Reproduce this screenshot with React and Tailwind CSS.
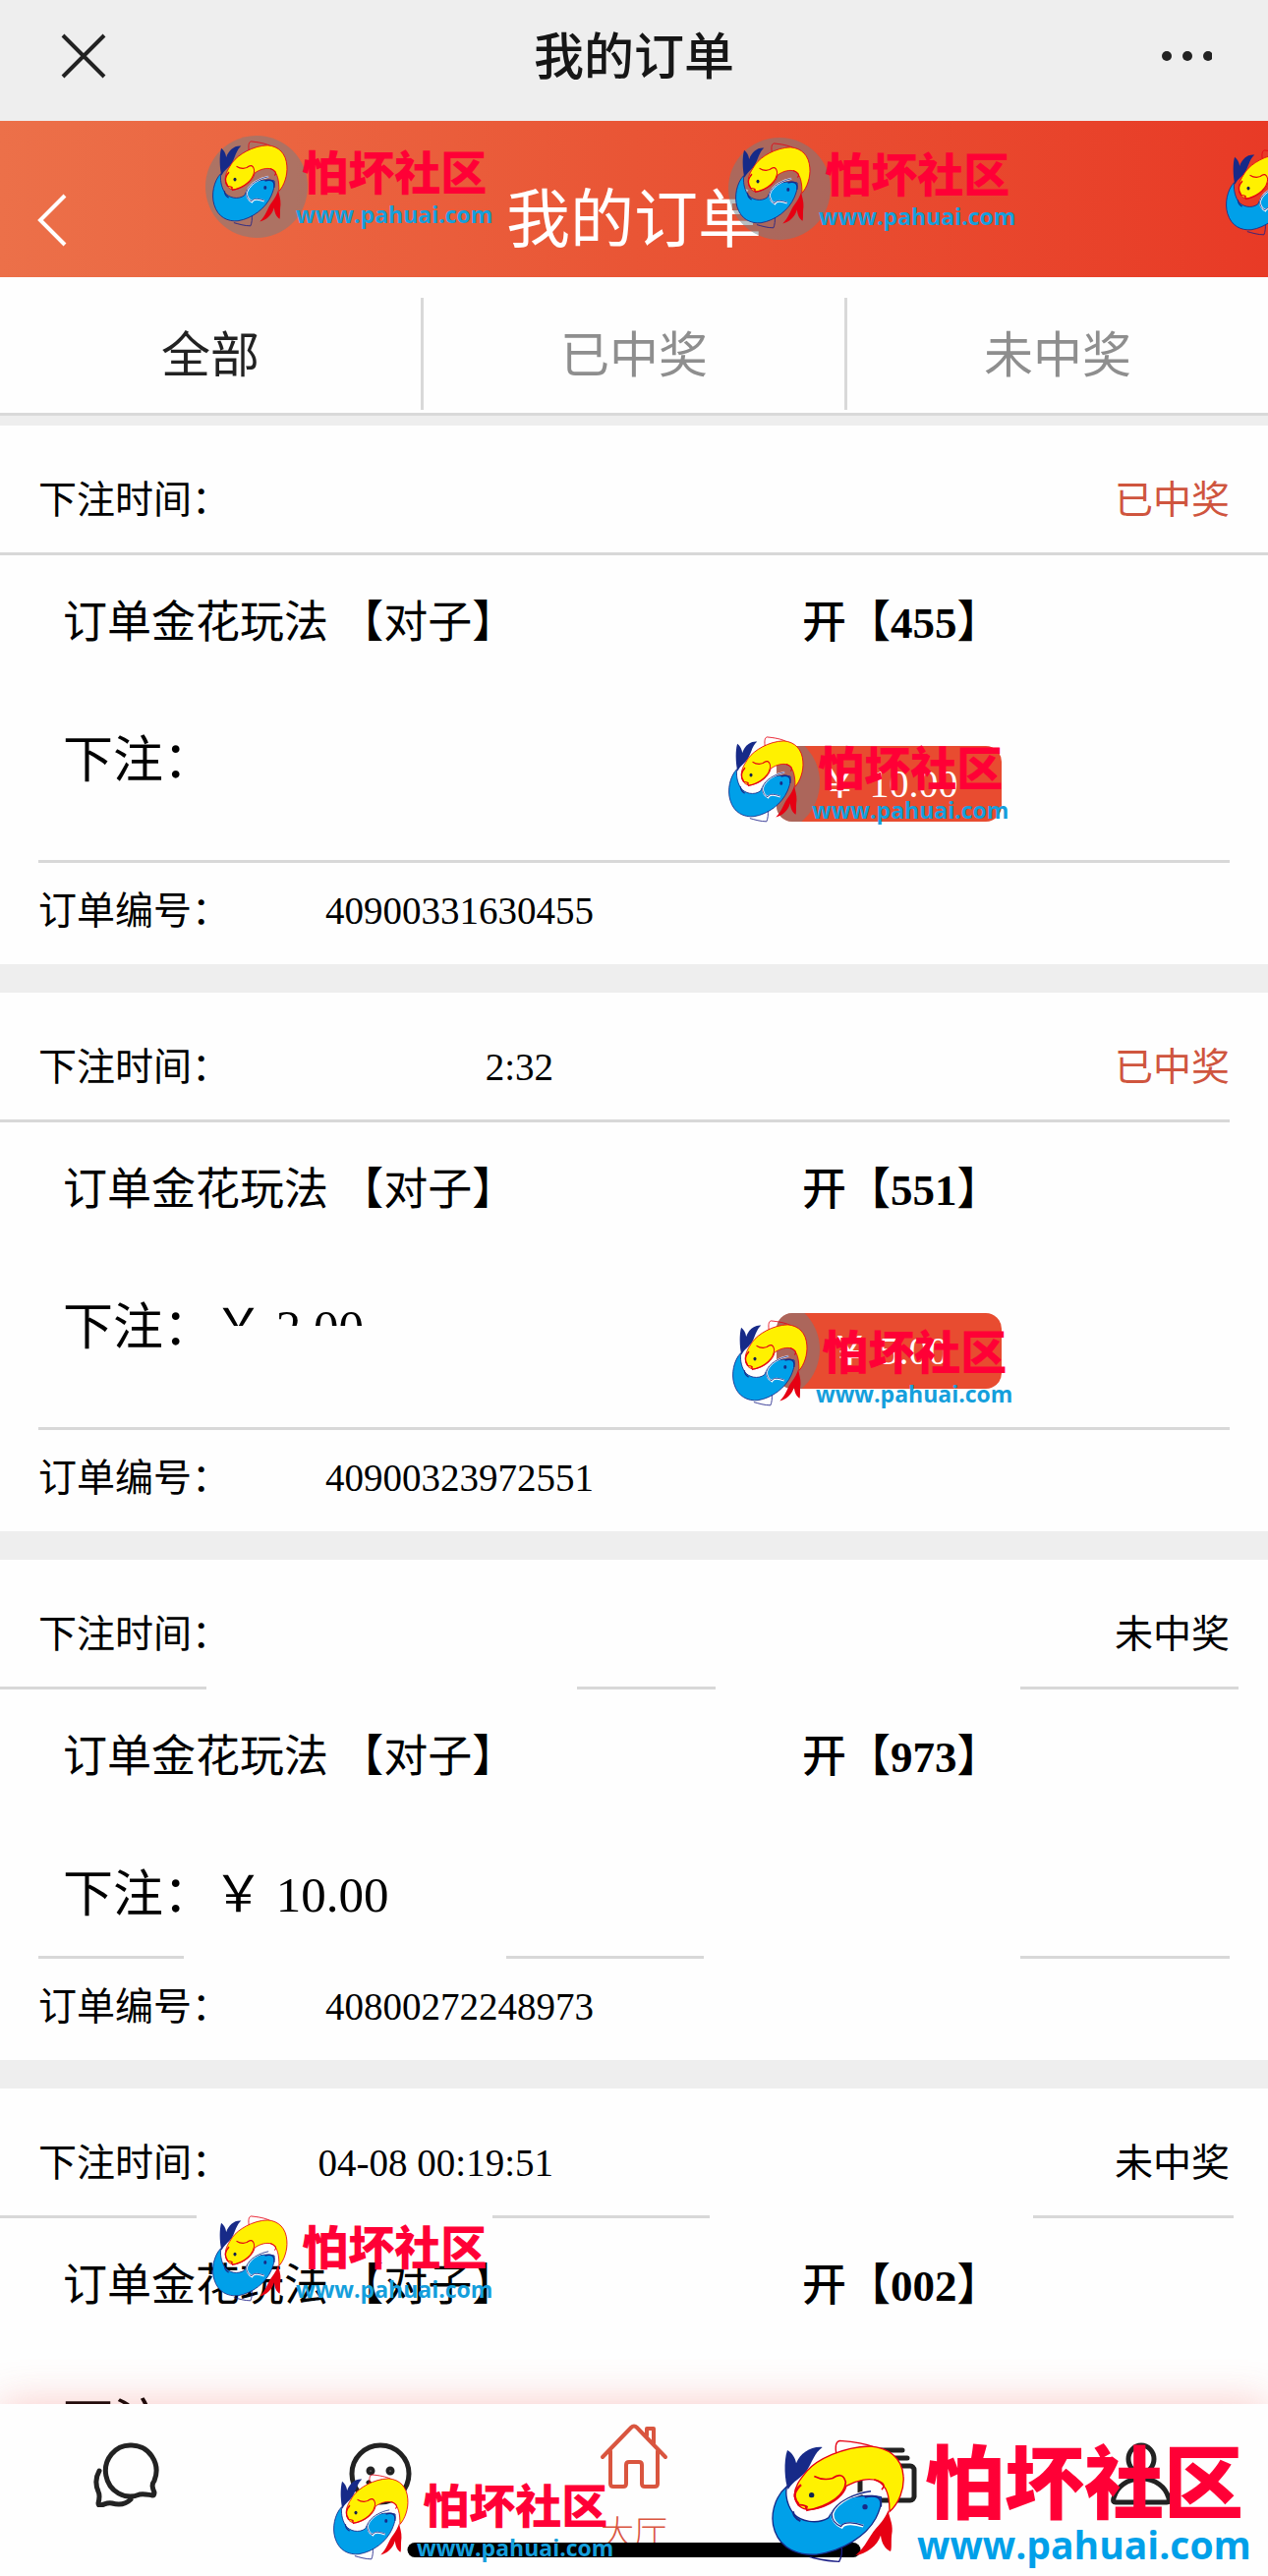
import { useState } from 'react';

const TABS = ['全部', '已中奖', '未中奖'];

// topRule / bottomRule: [from, to] pieces of the divider, in percent of the width
const ORDERS = [
  {
    id: '40900331630455',
    time: '',
    won: true,
    result: '455',
    prize: '10.00',
    topRule: [[0, 100]],
    bottomRule: [[3, 97]],
  },
  {
    id: '40900323972551',
    time: '2:32',
    won: true,
    result: '551',
    bet: '2.00',
    betCut: true,
    prize: '5.00',
    topRule: [[0, 97]],
    bottomRule: [[3, 97]],
  },
  {
    id: '40800272248973',
    time: '',
    won: false,
    result: '973',
    bet: '10.00',
    topRule: [[0, 16.3], [45.5, 56.4], [80.5, 97.7]],
    bottomRule: [[3, 14.5], [39.9, 55.5], [80.5, 97]],
  },
  {
    id: '',
    time: '04-08 00:19:51',
    won: false,
    result: '002',
    topRule: [[0, 15.5], [38.8, 56], [81.5, 97.3]],
    bottomRule: [[3, 97]],
  },
];

function Rule({ pieces }) {
  return (
    <div className="flex h-[3px]">
      {pieces.map(([from, to], i) => (
        <span
          key={from}
          className="h-full bg-[#d8d8d8]"
          style={{
            width: `${to - from}%`,
            marginLeft: `${from - (i ? pieces[i - 1][1] : 0)}%`,
          }}
        />
      ))}
    </div>
  );
}

function Fish({ className }) {
  return (
    <svg viewBox="42 63 408 380" preserveAspectRatio="none" className={className} aria-hidden="true">
      {/* fins */}
      <path d="M240 110C236 90 236 70 250 67C290 70 330 76 352 86" fill="none" stroke="#e60012" strokeWidth="4" />
      <path d="M255 388C258 405 255 425 248 438C215 438 185 430 158 424" fill="none" stroke="#1d2088" strokeWidth="4" />
      {/* tails */}
      <path d="M90 96C104 104 114 118 117 136C130 106 160 84 197 87C172 105 165 135 150 158C135 180 108 190 92 217C82 190 78 130 90 96Z" fill="#172a88" />
      <path d="M398 280C400 300 412 320 410 345C405 375 410 395 405 407C390 400 378 385 375 358C365 390 330 415 298 419C330 392 340 360 360 337C380 315 390 300 398 280Z" fill="#e60012" />
      {/* blue fish */}
      <path d="M88 208C50 240 35 300 52 345C72 400 125 420 180 416C260 405 330 360 360 305C378 270 378 254 376 240C340 232 290 236 262 250C235 262 225 290 215 304C180 325 130 315 108 290C88 262 84 232 88 208Z" fill="#00a0e9" stroke="#172a88" strokeWidth="4" />
      <path d="M108 284C108 300 118 308 130 314" fill="none" stroke="#172a88" strokeWidth="6" />
      <path d="M345 222C300 228 240 252 228 290C226 310 240 325 256 332C265 316 300 322 322 329" fill="none" stroke="#fff" strokeWidth="9" />
      <path d="M345 222C300 228 240 252 226 290C224 310 238 324 254 330C263 313 298 319 322 327" fill="none" stroke="#172a88" strokeWidth="4" />
      <path d="M326 240C360 232 380 240 375 270" fill="none" stroke="#172a88" strokeWidth="6" />
      <circle cx="327" cy="270" r="8" fill="#172a88" />
      {/* yellow fish */}
      <path d="M112 235C115 262 130 280 165 278C215 270 262 240 270 206C300 188 340 180 365 190C395 205 402 240 402 285C430 260 448 215 444 175C440 120 400 88 340 84C260 86 180 125 150 160C130 185 112 205 112 235Z" fill="#fff100" stroke="#e60012" strokeWidth="4" />
      <path d="M172 176C195 188 215 186 228 182C245 170 262 168 268 194C266 234 218 268 150 281L146 271C160 273 140 262 122 264" fill="none" stroke="#e60012" strokeWidth="5" />
      <path d="M125 262C105 240 112 220 132 202" fill="none" stroke="#e60012" strokeWidth="7" />
      <path d="M355 186C385 196 390 204 378 217" fill="none" stroke="#e60012" strokeWidth="5" />
      <circle cx="164" cy="234" r="8" fill="#12224f" />
    </svg>
  );
}

function Logo({ large = false, halo = false }) {
  return (
    <div
      aria-hidden="true"
      className={
        large
          ? 'relative flex items-start gap-3 whitespace-nowrap leading-none'
          : 'relative flex items-start gap-2 whitespace-nowrap leading-none'
      }
    >
      {halo && (
        <span className="absolute -left-[7px] -top-[5px] h-[104px] w-[104px] rounded-full bg-[#6f7f85]/50" />
      )}
      <Fish className={large ? 'h-[126px] w-[136px] shrink-0' : 'relative h-[88px] w-[77px] shrink-0'} />
      <div className="relative flex flex-col items-center pt-1">
        <span
          className={
            large
              ? 'text-[81px] leading-[86px] font-black text-[#ff0036]'
              : 'text-[47px] leading-[60px] font-black text-[#ff0036]'
          }
        >
          怕坏社区
        </span>
        <span
          className={
            large
              ? "font-['Open_Sans'] text-[39px] leading-[34px] font-bold text-[#00a0e9]"
              : "font-['Open_Sans'] text-[23px] leading-[22px] font-bold text-[#159fdc]"
          }
        >
          www.pahuai.com
        </span>
      </div>
    </div>
  );
}

function OrderCard({ order }) {
  const { id, time, won, result, bet, betCut, prize, topRule, bottomRule } = order;
  return (
    <article className="relative shrink-0 bg-[#fefefe] text-black">
      <div className="flex h-[129px] items-center px-[39px] pt-6 text-[39px]">
        <span>下注时间：</span>
        <time className="w-[329px] text-right">{time}</time>
        <span className={won ? 'ml-auto text-[#cf553e]' : 'ml-auto'}>{won ? '已中奖' : '未中奖'}</span>
      </div>
      <Rule pieces={topRule} />

      <div className="grid h-[134px] grid-cols-[752fr_474fr] items-center pt-[6px] pl-16 text-[45px]">
        <span>订单金花玩法 【对子】</span>
        <span className="font-medium">
          开【<strong className="font-bold">{result}</strong>】
        </span>
      </div>

      <div
        className={
          prize
            ? 'grid grid-cols-[752fr_474fr] items-start pt-[37px] pb-[39px] pl-16'
            : 'grid grid-cols-[752fr_474fr] items-start pt-[37px] pb-6 pl-16'
        }
      >
        <div className="flex text-[51px] leading-[76px]">
          <span>下注：</span>
          {bet && <span className={betCut ? 'h-9 overflow-hidden' : ''}>￥ {bet}</span>}
        </div>
        {prize && (
          <div className="relative mt-[23px] -ml-[26px] flex h-[77px] w-[229px] items-center justify-center overflow-hidden rounded-2xl bg-[#e84c30] text-[40px] text-white">
            <span className="absolute -top-[15px] -left-[60px] h-[104px] w-[104px] rounded-full bg-[#6f7f85]/50" />
            <span>￥ {prize}</span>
          </div>
        )}
      </div>

      <Rule pieces={bottomRule} />
      <div className="flex h-[103px] items-center px-[39px] pb-1 text-[39px]">
        <span>订单编号：</span>
        <span className="w-[370px] text-right">{id}</span>
      </div>
    </article>
  );
}

const iconProps = {
  fill: 'none',
  stroke: 'currentColor',
  strokeWidth: 5,
  strokeLinecap: 'round',
  strokeLinejoin: 'round',
  className: 'h-[68px] w-[72px]',
};

function ChatIcon() {
  return (
    <svg viewBox="0 0 72 68" {...iconProps}>
      <path d="M40 5a25 26 0 1 0 9 50c4-1 7 0 13 1c2 0 2-1 2-3c-2-5-3-8 0-12A25 26 0 0 0 40 5z" />
      <path d="M8 31c-4 7-4 14-1 21c2 4 1 8 0 12c0 2 1 3 3 2c4-1 6-3 11-2c7 2 14 1 19-4" />
    </svg>
  );
}

function SmileIcon() {
  return (
    <svg viewBox="0 0 72 68" {...iconProps}>
      <circle cx="36" cy="34" r="29" />
      <circle cx="26" cy="31" r="2" />
      <circle cx="46" cy="31" r="2" />
      <path d="M24 43c6 8 18 8 24 0" />
    </svg>
  );
}

function HomeIcon() {
  return (
    <svg viewBox="0 0 72 68" {...iconProps} strokeWidth="4">
      <path d="M4 36L33 6c2-2 4-2 6 0l29 30" />
      <path d="M12 30v33c0 2 1 3 3 3h10c2 0 3-1 3-3V44c0-2 1-3 3-3h10c2 0 3 1 3 3v19c0 2 1 3 3 3h10c2 0 3-1 3-3V30" />
      <path d="M49 14V7h7v15" />
    </svg>
  );
}

function CardsIcon() {
  return (
    <svg viewBox="0 0 72 68" {...iconProps}>
      <path d="M17 10h34M12 18h44" />
      <rect x="8" y="26" width="55" height="35" rx="4" />
    </svg>
  );
}

function UserIcon() {
  return (
    <svg viewBox="0 0 72 68" {...iconProps}>
      <ellipse cx="36" cy="19" rx="13" ry="14" />
      <path d="M10 63c-2 0-3-1-2-4c3-12 14-20 28-20s25 8 28 20c1 3 0 4-2 4z" />
    </svg>
  );
}

const NAV = [
  { name: '聊天', Icon: ChatIcon },
  { name: '好友', Icon: SmileIcon },
  { name: '大厅', Icon: HomeIcon, active: true },
  { name: '订单', Icon: CardsIcon },
  { name: '我的', Icon: UserIcon },
];

export default function App() {
  const [tab, setTab] = useState('全部');

  return (
    <div className="flex h-screen flex-col overflow-hidden bg-[#eeeeee] font-['Liberation_Serif','Noto_Sans_CJK_SC',serif]">
      {/* Browser title bar */}
      <div className="flex h-[123px] shrink-0 items-center justify-between px-[57px] pb-2 text-[#222]">
        <button type="button" aria-label="关闭" className="w-14">
          <svg viewBox="0 0 56 56" className="h-14 w-14" stroke="currentColor" strokeWidth="4">
            <path d="M7 6l42 42M49 6L7 48" />
          </svg>
        </button>
        <h1 className="pt-1 text-[51px] font-medium text-[#161616]">我的订单</h1>
        <button type="button" aria-label="更多" className="w-14">
          <svg viewBox="0 0 56 56" className="h-14 w-14" fill="currentColor">
            <circle cx="10" cy="27" r="5" />
            <circle cx="31" cy="27" r="5" />
            <circle cx="52" cy="27" r="5" />
          </svg>
        </button>
      </div>

      {/* Page header */}
      <header className="relative flex h-[159px] shrink-0 items-center justify-center overflow-hidden bg-linear-to-r from-[#ec7049] via-[#e95535] to-[#e83a26] pt-11 text-white">
        <button type="button" aria-label="返回" className="absolute bottom-7 left-9">
          <svg viewBox="0 0 36 60" className="h-15 w-9" fill="none" stroke="currentColor" strokeWidth="4">
            <path d="M30 5L5 30l25 25" />
          </svg>
        </button>
        <h2 className="text-[65px] leading-none">我的订单</h2>
        <div className="absolute top-5 left-[216px]">
          <Logo halo />
        </div>
        <div className="absolute top-[22px] left-[748px]">
          <Logo halo />
        </div>
        <div className="absolute top-[29px] left-[1247px]">
          <Logo />
        </div>
      </header>

      {/* Filters */}
      <div className="mb-[10px] flex h-[141px] shrink-0 items-center border-b-[3px] border-[#d9d9d9] bg-[#fefefe] pt-[18px]">
        {TABS.map((name) => (
          <button
            key={name}
            type="button"
            onClick={() => setTab(name)}
            className={
              name === tab
                ? 'h-[114px] flex-1 border-r-[3px] border-[#d9d9d9] pt-1 text-[50px] text-[#222] last:border-r-0'
                : 'h-[114px] flex-1 border-r-[3px] border-[#d9d9d9] pt-1 text-[50px] text-[#8e8e8e] last:border-r-0'
            }
          >
            {name}
          </button>
        ))}
      </div>

      {/* Orders */}
      <main className="relative flex min-h-0 flex-1 flex-col gap-[29px] overflow-hidden">
        {ORDERS.map((order) => (
          <OrderCard key={order.result} order={order} />
        ))}
        <div className="absolute top-[316px] left-[741px]">
          <Logo />
        </div>
        <div className="absolute top-[910px] left-[745px]">
          <Logo />
        </div>
        <div className="absolute top-[1821px] left-[216px]">
          <Logo />
        </div>
      </main>

      {/* Bottom navigation */}
      <nav className="relative flex h-[175px] shrink-0 bg-[#fefefe] shadow-[0_0_40px_rgba(240,80,70,0.3)]">
        {NAV.map(({ name, Icon, active }) => (
          <a
            key={name}
            href="#"
            aria-label={name}
            className={
              active
                ? 'flex flex-1 flex-col items-center pt-[18px] text-[#d9553f]'
                : 'flex flex-1 flex-col items-center pt-[37px] text-[#222]'
            }
          >
            <Icon />
            {active && <span className="mt-[26px] text-[34px] leading-10 font-light">{name}</span>}
          </a>
        ))}
        <span className="absolute bottom-[19px] left-1/2 h-[15px] w-[461px] -translate-x-1/2 rounded-full bg-black" />
        <div className="absolute bottom-[16px] left-[339px]">
          <Logo />
        </div>
        <div className="absolute top-9 left-[785px]">
          <Logo large />
        </div>
      </nav>
    </div>
  );
}
